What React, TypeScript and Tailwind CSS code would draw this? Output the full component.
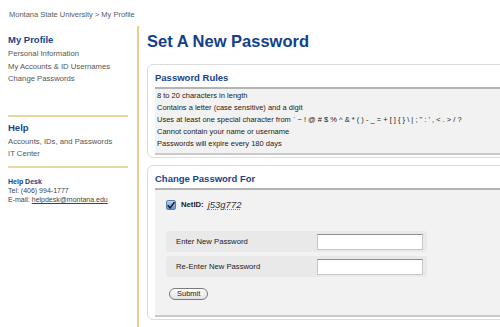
import React from 'react'

const font = "font-['Liberation_Sans',Arial,sans-serif]"

const rules = [
  '8 to 20 characters in length',
  'Contains a letter (case sensitive) and a digit',
  'Uses at least one special character from ` ~ ! @ # $ % ^ & * ( ) - _ = + [ ] { } \\ | ; " : \' , < . > / ?',
  'Cannot contain your name or username',
  'Passwords will expire every 180 days',
]

const Panel = ({ title, children }: { title: string; children: React.ReactNode }) => (
  <div className="w-[380px] rounded-[6px] border border-[#dcdcdc] bg-white px-[7px] pb-[2px]">
    <h2 className="pt-[7px] pb-[4px] text-[9.5px] leading-[11px] font-bold text-[#1b4389]">{title}</h2>
    <div className="border-t-[2px] border-b-[2px] border-t-[#b4b4b4] border-b-[#c9c9c9] bg-[#f2f2f2]">
      {children}
    </div>
  </div>
)

const Checkbox = () => (
  <span className="inline-flex h-[10px] w-[10px] items-center justify-center rounded-[2px] border border-[#5b7fb5] bg-gradient-to-b from-[#bcd4f2] to-[#5e8fd0]">
    <svg width="9" height="9" viewBox="0 0 10 10">
      <path d="M1.5 5.2 L4 8 L9 1.2" fill="none" stroke="#1a1a1a" strokeWidth="1.8" strokeLinecap="round" strokeLinejoin="round" />
    </svg>
  </span>
)

const FieldRow = ({ label }: { label: string }) => (
  <div className="flex h-[21px] w-[261px] items-center rounded-[3px] bg-[#e9e9e9]">
    <span className="w-[151px] pl-[10px] text-[7.7px] text-[#222]">{label}</span>
    <input
      type="password"
      className="h-[16px] w-[106px] border border-[#c6c6c6] border-t-[#8c8c8c] bg-white outline-none"
    />
  </div>
)

export default function App() {
  return (
    <div className={`h-[327px] w-[500px] overflow-hidden bg-white ${font}`}>
      {/* breadcrumb */}
      <div className="pl-[9px] pt-[10px] text-[7.5px] leading-[9px] text-[#5a5a5a]">
        Montana State University &gt; My Profile
      </div>

      <div className="mt-[7px] flex">
        {/* left nav */}
        <aside className="ml-[8px] w-[120px] shrink-0 pt-[8px]">
          <h3 className="text-[9.5px] leading-[11px] font-bold text-[#1b4389]">My Profile</h3>
          <ul className="mt-[3px] text-[7.7px] leading-[12.5px] text-[#555]">
            <li>Personal Information</li>
            <li>My Accounts &amp; ID Usernames</li>
            <li>Change Passwords</li>
          </ul>

          <div className="mt-[29px] h-[2px] bg-[#e6d79f]" />

          <h3 className="mt-[5px] text-[9.5px] leading-[11px] font-bold text-[#1b4389]">Help</h3>
          <ul className="mt-[3px] text-[7.7px] leading-[12.5px] text-[#555]">
            <li>Accounts, IDs, and Passwords</li>
            <li>IT Center</li>
          </ul>

          <div className="mt-[5px] h-[2px] bg-[#e6d79f]" />

          <div className="mt-[9px] text-[7px] leading-[9.3px] text-[#444]">
            <div className="font-bold text-[#1b4389]">Help Desk</div>
            <div>Tel: (406) 994-1777</div>
            <div>
              E-mail: <span className="underline">helpdesk@montana.edu</span>
            </div>
          </div>
        </aside>

        {/* main */}
        <main className="ml-[9px] min-h-[320px] shrink-0 border-l-[2px] border-[#e3cf8a] pl-[8px]">
          <h1 className="mt-[5px] text-[16.5px] leading-[20px] font-bold text-[#153f8a]">Set A New Password</h1>

          <div className="mt-[13px]">
            <Panel title="Password Rules">
              <ul className="px-[2px] pt-[1px] pb-[3px] text-[7.5px] leading-[12px] text-[#222]">
                {rules.map((r) => (
                  <li key={r}>{r}</li>
                ))}
              </ul>
            </Panel>
          </div>

          <div className="mt-[7px]">
            <Panel title="Change Password For">
              <div className="px-[11px] pt-[8px] pb-[12px]">
                <div className="flex items-center gap-[5px]">
                  <Checkbox />
                  <span className="text-[7.7px] font-bold text-[#222]">NetID:</span>
                  <span className="-ml-[1px] text-[9.5px] italic text-[#333] underline decoration-dotted decoration-[#5a7fc0]">j53g772</span>
                </div>

                <div className="mt-[19px] flex flex-col gap-[4px]">
                  <FieldRow label="Enter New Password" />
                  <FieldRow label="Re-Enter New Password" />
                </div>

                <button className="mt-[11px] ml-[3px] h-[12px] rounded-full border border-[#7a7a7a] bg-gradient-to-b from-white to-[#e2e2e2] px-[7px] text-[7.5px] leading-[10px] text-[#222]">
                  Submit
                </button>
              </div>
            </Panel>
          </div>
        </main>
      </div>
    </div>
  )
}
